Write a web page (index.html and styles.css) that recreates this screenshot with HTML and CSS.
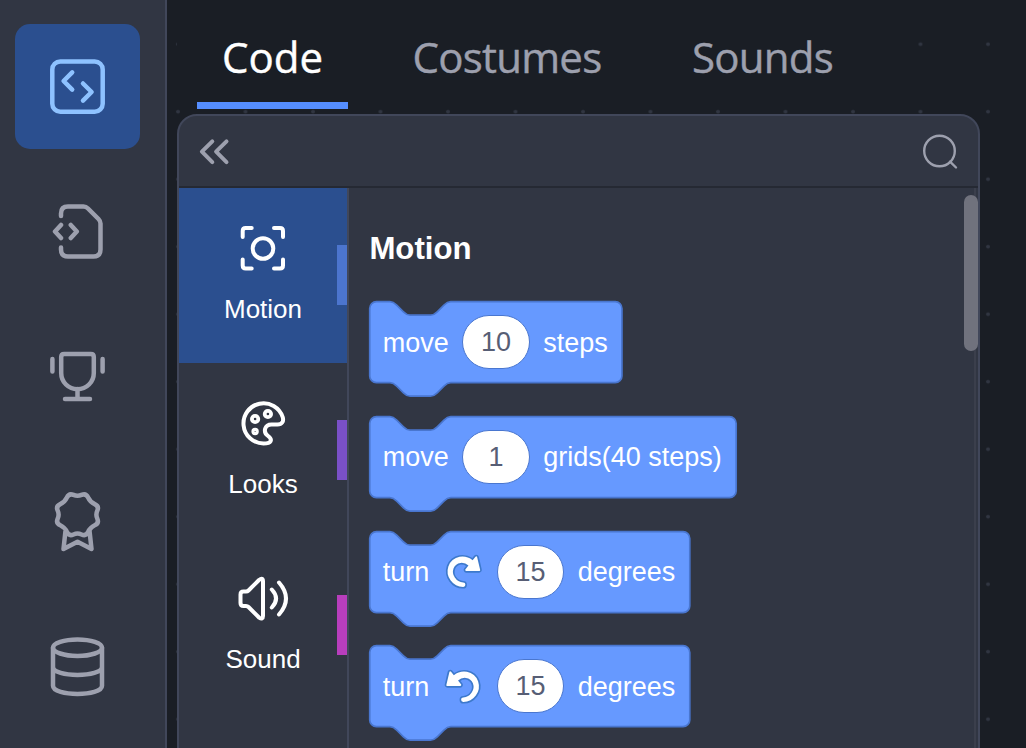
FILE: index.html
```html
<!DOCTYPE html>
<html lang="en">
<head>
<meta charset="utf-8">
<title>Code editor</title>
<link rel="stylesheet" href="styles.css">
</head>
<body>
<div class="app">
  <nav class="sidebar">
    <a class="tool tool-active"><svg viewBox="15 24 125 125"><rect x="52.3" y="61.4" width="50.4" height="50.3" rx="8"/><path d="M72.2 72.3L63.6 81l8.6 8.6M83 83.5l8.6 8.5-8.6 8.6"/></svg></a>
    <a class="tool"><svg viewBox="15 169 125 125"><path d="M61 216v-2.5q0-7 7-7h15.5q2.500 0 4.500 2l10.500 10.500q2 2 2 4.500V249.500q0 7-7 7H68q-7 0-7-7V247.500M61 225l-6 6.500 6 6.500M70.800 225l6 6.500-6 6.500"/></svg></a>
    <a class="tool"><svg viewBox="15 314 125 125"><path d="M61.200 357q0-3 3-3h26.600q3 0 3 3v16a16.300 16.300 0 0 1-32.600 0zM77.500 389v10M65 399h25M52.400 359v12.500M102.600 359v12.500"/></svg></a>
    <a class="tool"><svg viewBox="15 459 125 125"><g transform="translate(77.500 514.700)"><path d="M4-19.800Q8.500-21.800 10.600-17.200 12.700-12.700 17.200-10.600 21.800-8.500 19.800-4 18 0 19.800 4 21.800 8.500 17.200 10.600 12.700 12.700 10.600 17.200 8.500 21.800 4 19.800 0 18-4 19.800-8.500 21.800-10.600 17.200-12.700 12.700-17.200 10.600-21.800 8.500-19.800 4-18 0-19.800-4-21.800-8.500-17.200-10.600-12.700-12.700-10.600-17.200-8.500-21.800-4-19.800 0-18 4-19.800zM-12 16L-14 34.300 0 27 14 34.300 12 16"/></g></svg></a>
    <a class="tool"><svg viewBox="15 604 125 125"><ellipse cx="77.500" cy="647.700" rx="24.500" ry="8.200"/><path d="M53 647.700v38c0 11 49 11 49 0v-38M53 667c0 10.500 49 10.500 49 0"/></svg></a>
  </nav>
  <main class="workspace">
    <div class="tabs">
      <div class="tab tab-active">Code</div>
      <div class="tab tab-costumes">Costumes</div>
      <div class="tab tab-sounds">Sounds</div>
    </div>
    <section class="panel">
      <header class="panel-head">
        <svg class="collapse" viewBox="199 138 32 28"><path d="M212.300 141.300l-10.400 10.400 10.400 10.400M226.500 141.300l-10.400 10.400 10.400 10.400"/></svg>
        <svg class="search" viewBox="920 132 40 40"><circle cx="939.500" cy="151" r="15.300"/><path d="M950 161.700l6 5.800"/></svg>
      </header>
      <div class="panel-body">
        <div class="categories">
          <div class="category category-active">
            <svg viewBox="236 221 54 54"><path d="M242.700 237v-6q0-3 3-3h6M274 228h6q3 0 3 3v6M283 259.500v6q0 3-3 3h-6M251.700 268.500h-6q-3 0-3-3v-6"/><circle cx="263" cy="248.500" r="10.300"/></svg>
            <span>Motion</span><i class="mark motion"></i>
          </div>
          <div class="category">
            <svg viewBox="236 396 54 54"><path d="M263.500 443.500A20.100 20.100 0 1 1 282.700 417.200C284 421.500 282 424.500 277.500 424.500H271.500C264.500 424.500 263 432 267.500 435.500 273.500 440 271 443.500 263.500 443.500z"/><circle class="dot" cx="255.100" cy="419" r="3.200"/><circle class="dot" cx="267.900" cy="414" r="3.200"/><circle class="dot-small" cx="255.100" cy="431.500" r="2.100"/></svg>
            <span>Looks</span><i class="mark looks"></i>
          </div>
          <div class="category">
            <svg viewBox="236 571 54 54"><path d="M240.500 594.500q0-3 3-3h2.500q1.500 0 2.500-1l10.500-10.500q4-3 4 1.500v34.500q0 4-4 1.500L248.500 607q-1-1-2.500-1h-2.500q-3 0-3-3zM271.800 589.500q8.500 9 0 18M279 582.500q14 16 0 32"/></svg>
            <span>Sound</span><i class="mark sound"></i>
          </div>
        </div>
        <div class="palette">
          <h2>Motion</h2>
          <div class="blocks">
            <div class="block block-steps"><svg class="shape" viewBox="-1 -1 152 59"><path d="M0 4A4 4 0 0 1 4 0H12c2 0 3 1 4 2l4 4c1 1 2 2 4 2h12c2 0 3-1 4-2l4-4c1-1 2-2 4-2H145.500a4 4 0 0 1 4 4v40a4 4 0 0 1-4 4H48c-2 0-3 1-4 2l-4 4c-1 1-2 2-4 2H24c-2 0-3-1-4-2l-4-4c-1-1-2-2-4-2H4a4 4 0 0 1-4-4z"/></svg><span>move</span><b>10</b><span>steps</span></div>
            <div class="block block-grids"><svg class="shape" viewBox="-1 -1 220 59"><path d="M0 4A4 4 0 0 1 4 0H12c2 0 3 1 4 2l4 4c1 1 2 2 4 2h12c2 0 3-1 4-2l4-4c1-1 2-2 4-2H213.200a4 4 0 0 1 4 4v40a4 4 0 0 1-4 4H48c-2 0-3 1-4 2l-4 4c-1 1-2 2-4 2H24c-2 0-3-1-4-2l-4-4c-1-1-2-2-4-2H4a4 4 0 0 1-4-4z"/></svg><span>move</span><b>1</b><span>grids(40 steps)</span></div>
            <div class="block block-turn"><svg class="shape" viewBox="-1 -1 192 59"><path d="M0 4A4 4 0 0 1 4 0H12c2 0 3 1 4 2l4 4c1 1 2 2 4 2h12c2 0 3-1 4-2l4-4c1-1 2-2 4-2H185.700a4 4 0 0 1 4 4v40a4 4 0 0 1-4 4H48c-2 0-3 1-4 2l-4 4c-1 1-2 2-4 2H24c-2 0-3-1-4-2l-4-4c-1-1-2-2-4-2H4a4 4 0 0 1-4-4z"/></svg><span>turn</span><svg class="rotate" viewBox="0 0 24 24"><path class="edge" d="M22.680 12.200a1.600 1.600 0 0 1-1.270.63H13.720a1.590 1.590 0 0 1-1.160-2.580l1.120-1.410a4.820 4.820 0 0 0-3.140-.77 4.310 4.310 0 0 0-2 .8 4.250 4.250 0 0 0-1.340 1.730 5.060 5.060 0 0 0 .54 4.620A5.580 5.580 0 0 0 12 17.740a2.260 2.260 0 0 1-.16 4.520A10.250 10.250 0 0 1 3.740 18 10.140 10.140 0 0 1 2.250 8.780 9.700 9.700 0 0 1 5.080 4.640 9.920 9.920 0 0 1 9.660 2.500a10.660 10.660 0 0 1 7.720 1.680l1.080-1.350a1.570 1.570 0 0 1 1.240-.6 1.600 1.600 0 0 1 1.540 1.210l1.700 7.370A1.570 1.570 0 0 1 22.680 12.200z"/><path d="M21.380 11.830H13.770a.59.59 0 0 1-.43-1l1.750-2.190a5.900 5.900 0 0 0-4.700-1.580 5.070 5.070 0 0 0-4.110 3.170A6 6 0 0 0 7 15.770a6.510 6.510 0 0 0 5 2.920 1.310 1.310 0 0 1-.08 2.620 9.300 9.300 0 0 1-7.350-3.820A9.160 9.160 0 0 1 3.170 9.120 8.510 8.510 0 0 1 5.710 5.400 8.760 8.760 0 0 1 9.820 3.480a9.710 9.710 0 0 1 7.750 2.070l1.670-2.100a.59.59 0 0 1 1 .21L22 11.080A.59.59 0 0 1 21.380 11.830z"/></svg><b>15</b><span>degrees</span></div>
            <div class="block block-turn"><svg class="shape" viewBox="-1 -1 192 59"><path d="M0 4A4 4 0 0 1 4 0H12c2 0 3 1 4 2l4 4c1 1 2 2 4 2h12c2 0 3-1 4-2l4-4c1-1 2-2 4-2H185.700a4 4 0 0 1 4 4v40a4 4 0 0 1-4 4H48c-2 0-3 1-4 2l-4 4c-1 1-2 2-4 2H24c-2 0-3-1-4-2l-4-4c-1-1-2-2-4-2H4a4 4 0 0 1-4-4z"/></svg><span>turn</span><svg class="rotate rotate-left" viewBox="0 0 24 24"><path class="edge" d="M22.680 12.200a1.600 1.600 0 0 1-1.270.63H13.720a1.590 1.590 0 0 1-1.160-2.580l1.120-1.410a4.820 4.820 0 0 0-3.140-.77 4.310 4.310 0 0 0-2 .8 4.250 4.250 0 0 0-1.340 1.730 5.060 5.060 0 0 0 .54 4.620A5.580 5.580 0 0 0 12 17.740a2.260 2.260 0 0 1-.16 4.520A10.250 10.250 0 0 1 3.740 18 10.140 10.140 0 0 1 2.250 8.780 9.700 9.700 0 0 1 5.080 4.640 9.920 9.920 0 0 1 9.660 2.500a10.660 10.660 0 0 1 7.720 1.680l1.080-1.350a1.570 1.570 0 0 1 1.240-.6 1.600 1.600 0 0 1 1.540 1.210l1.700 7.370A1.570 1.570 0 0 1 22.680 12.200z"/><path d="M21.380 11.830H13.770a.59.59 0 0 1-.43-1l1.750-2.190a5.900 5.900 0 0 0-4.700-1.580 5.070 5.070 0 0 0-4.110 3.170A6 6 0 0 0 7 15.770a6.510 6.510 0 0 0 5 2.920 1.310 1.310 0 0 1-.08 2.620 9.300 9.300 0 0 1-7.350-3.820A9.160 9.160 0 0 1 3.170 9.120 8.510 8.510 0 0 1 5.710 5.400 8.760 8.760 0 0 1 9.820 3.480a9.710 9.710 0 0 1 7.750 2.070l1.670-2.100a.59.59 0 0 1 1 .21L22 11.080A.59.59 0 0 1 21.380 11.830z"/></svg><b>15</b><span>degrees</span></div>
          </div>
          <div class="scroll-track"></div>
          <div class="scrollbar"></div>
        </div>
      </div>
    </section>
  </main>
</div>
</body>
</html>
```
FILE: styles.css
```css
* { box-sizing: border-box; }
body { margin: 0; background: #1a1e25; font-family: "Liberation Sans", Arial, sans-serif; color: #fff; }
svg { display: block; fill: none; stroke: currentColor; stroke-linecap: round; stroke-linejoin: round; overflow: visible; }
.app { display: flex; width: 1026px; height: 748px; overflow: hidden; }
.sidebar { display: flex; flex: none; flex-direction: column; gap: 20px; width: 167px; padding: 24px 0 0 15px; background: #313643; border-right: 2px solid #41475a; color: #9da0ae; }
.tool { flex: none; width: 125px; height: 125px; border-radius: 15px; }
.tool svg { width: 125px; height: 125px; stroke-width: 4.5; }
.tool-active { background: #2b4f8f; color: #8ec2ff; }
.workspace { flex: 1; min-width: 0; background-color: #1a1e25; background-image: radial-gradient(circle at 11px 44.2px, #303541 1.5px, transparent 2.2px); background-size: 67.5px 67.5px; }
.tabs { display: flex; width: 713px; height: 109px; margin-left: 10px; padding-left: 20px; background: #1a1e25; font-family: "Open Sans", "Noto Sans", sans-serif; font-size: 42px; line-height: 114px; color: #9da0ae; -webkit-text-stroke: 0.4px currentColor; }
.tab { flex: none; height: 109px; text-align: center; white-space: nowrap; }
.tab-active { width: 151px; border-bottom: 7px solid #558eff; color: #fff; }
.tab-costumes { width: 238px; margin-left: 40px; letter-spacing: -0.75px; }
.tab-sounds { width: 191px; margin-left: 41px; letter-spacing: -0.75px; }
.panel { width: 803px; height: 640px; margin: 5px 0 0 10px; border: 2px solid #41475a; border-radius: 20px 20px 0 0; background: #313643; overflow: hidden; }
.panel-head { display: flex; justify-content: space-between; align-items: flex-start; height: 72px; padding: 22px 18px 0 20px; border-bottom: 2px solid #252933; color: #9da0ae; }
.collapse { width: 32px; height: 28px; stroke-width: 4; }
.search { width: 40px; height: 40px; margin-top: -6px; stroke-width: 2.4; }
.panel-body { display: flex; }
.categories { flex: none; width: 170px; height: 570px; border-right: 2px solid #41475a; }
.category { position: relative; display: flex; flex-direction: column; align-items: center; height: 175px; padding-top: 33px; font-size: 26px; line-height: 30px; }
.category-active { background: #2b4f8f; }
.category svg { width: 54px; height: 54px; stroke-width: 4; }
.category .dot { stroke-width: 3.8; }
.category .dot-small { stroke-width: 3.2; }
.category span { margin-top: 19px; }
.mark { position: absolute; right: 0; top: 57px; width: 10px; height: 60px; }
.motion { background: #4c75ce; }
.looks { background: #7a50c8; }
.sound { background: #b83ebd; }
.palette { position: relative; flex: 1; padding: 43px 0 0 20.4px; }
h2 { margin: 0; font-size: 31.2px; line-height: 35px; }
.blocks { display: flex; flex-direction: column; gap: 33.75px; margin-top: 35.7px; }
.block { position: relative; display: flex; align-items: center; gap: 13.5px; height: 81px; padding-left: 13.3px; font-size: 27px; white-space: nowrap; }
.block > * { position: relative; flex: none; }
.block span { padding-top: 2px; }
.block .shape { position: absolute; left: -1.7px; top: -1.7px; height: 99.56px; fill: #6699ff; stroke: #4976cf; stroke-width: 1; }
.block-steps .shape { width: 256.5px; }
.block-grids .shape { width: 371.25px; }
.block-turn .shape { width: 324px; }
.block b { width: 67.5px; height: 54px; border: 1.7px solid #4976cf; border-radius: 27px; background: #fff; color: #575e75; font-weight: 400; line-height: 53px; text-align: center; }
.rotate { width: 40.5px; height: 40.5px; fill: #fff; stroke: none; }
.rotate .edge { fill: #3d79cc; }
.rotate-left { transform: scaleX(-1); }
.scroll-track { position: absolute; right: 2px; top: 0; width: 2px; height: 560px; background: #3b3f4c; }
.scrollbar { position: absolute; right: 0; top: 7px; width: 14px; height: 156px; border-radius: 7px; background: #70727d; }
```
